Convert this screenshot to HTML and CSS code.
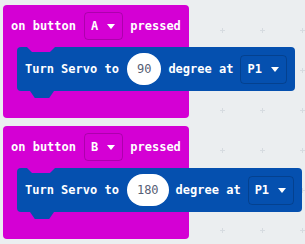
FILE: index.html
```html
<!DOCTYPE html>
<html lang="en">
<head>
    <meta charset="UTF-8">
    <meta name="viewport" content="width=device-width, initial-scale=1.0">
    <title>Servo blocks</title>
    <link rel="stylesheet" href="styles.css">
</head>
<body>
    <svg class="grid" width="305" height="244" aria-hidden="true">
        <defs>
            <pattern id="plus" x="20" y="28" width="40" height="40" patternUnits="userSpaceOnUse">
                <rect x="0" y="2" width="5" height="1" fill="#d6dbe0"/>
                <rect x="2" y="0" width="1" height="5" fill="#d6dbe0"/>
            </pattern>
        </defs>
        <rect width="305" height="244" fill="url(#plus)"/>
    </svg>

    <div class="workspace">
        <div class="event">
            <div class="head">
                <span>on button</span>
                <span class="dropdown">A<i class="arrow"></i></span>
                <span>pressed</span>
            </div>
            <div class="slot">
                <div class="stmt">
                    <span>Turn Servo to</span>
                    <span class="num">90</span>
                    <span>degree at</span>
                    <span class="dropdown">P1<i class="arrow"></i></span>
                </div>
            </div>
            <div class="foot"></div>
        </div>

        <div class="event">
            <div class="head">
                <span>on button</span>
                <span class="dropdown">B<i class="arrow"></i></span>
                <span>pressed</span>
            </div>
            <div class="slot">
                <div class="stmt">
                    <span>Turn Servo to</span>
                    <span class="num">180</span>
                    <span>degree at</span>
                    <span class="dropdown">P1<i class="arrow"></i></span>
                </div>
            </div>
            <div class="foot"></div>
        </div>
    </div>
</body>
</html>
```

FILE: styles.css
```css
body {
    margin: 0;
    background: #ebeef0;
    font-family: 'DejaVu Sans Mono', 'Liberation Mono', monospace;
    font-size: 12px;
    font-weight: bold;
    color: white;
    width: 305px;
    height: 244px;
    overflow: hidden;
    position: relative;
}
.grid {
    position: absolute;
    top: 0;
    left: 0;
}
.workspace {
    position: relative;
    padding: 5px 0 0 3px;
    display: flex;
    flex-direction: column;
    align-items: flex-start;
    gap: 8px;
}
.event {
    background-color: #d400d4;
    border-radius: 4px;
    display: flex;
    flex-direction: column;
    width: max-content;
}
.head {
    display: flex;
    align-items: center;
    gap: 8px;
    padding: 7px 8px 7px 8px;
    line-height: 1;
}
.head .dropdown {
    margin-right: -1px;
}
.dropdown {
    display: flex;
    align-items: center;
    height: 28px;
    box-sizing: border-box;
    padding: 0 7px 0 6px;
    border: 1px solid rgba(0, 0, 0, 0.18);
    border-radius: 4px;
}
.arrow {
    width: 0;
    height: 0;
    margin-left: 9px;
    border-left: 4px solid transparent;
    border-right: 4px solid transparent;
    border-top: 5px solid white;
}
.slot {
    width: 0;
    margin-left: 14px;
}
.stmt {
    position: relative;
    width: max-content;
    height: 44px;
    box-sizing: border-box;
    display: flex;
    align-items: center;
    gap: 7px;
    padding: 0 8px;
    background-color: #0550af;
    border-radius: 4px;
    line-height: 1;
}
.stmt > span:first-child {
    margin-right: 1px;
}
.stmt::before {
    content: "";
    position: absolute;
    top: 0;
    left: 10px;
    width: 28px;
    height: 5px;
    background-color: #d400d4;
    clip-path: polygon(0 0, 100% 0, 82% 100%, 18% 100%);
}
.stmt::after {
    content: "";
    position: absolute;
    bottom: -7px;
    left: 13px;
    width: 24px;
    height: 7px;
    background-color: #0550af;
    clip-path: polygon(0 0, 100% 0, 80% 100%, 20% 100%);
}
.num {
    display: flex;
    align-items: center;
    justify-content: center;
    height: 32px;
    padding: 0 10px;
    background: white;
    color: #575e75;
    font-weight: normal;
    border-radius: 16px;
}
.stmt .dropdown {
    height: 29px;
}
.foot {
    height: 27px;
}
```
